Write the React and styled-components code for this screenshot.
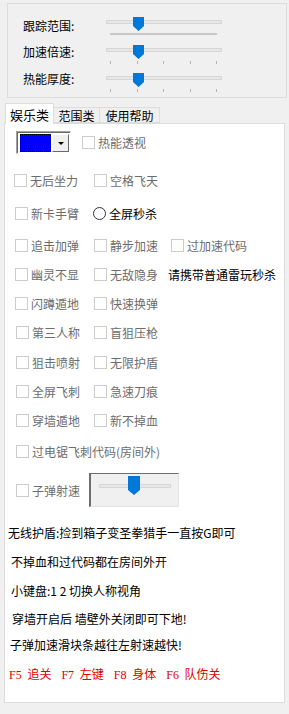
import React from "react";
import styled, { createGlobalStyle } from "styled-components";

const GlobalStyle = createGlobalStyle`
  html, body {
    margin: 0;
    padding: 0;
    background: #f0f0f0;
  }
  body {
    font-family: "Noto Sans CJK SC", "Noto Sans", sans-serif;
    font-size: 12px;
    color: #000;
  }
`;

const Window = styled.div`
  width: 289px;
  height: 714px;
  padding-top: 3px;
  box-sizing: border-box;
  background: #f0f0f0;
  overflow: hidden;
`;

const GroupBox = styled.div`
  margin-left: 7px;
  width: 280px;
  height: 95px;
  box-sizing: border-box;
  border: 1px solid #dcdcdc;
  padding: 13px 0 0 15px;
`;

const SliderRow = styled.div`
  display: flex;
  height: 28px;
`;

const SliderLabel = styled.span`
  width: 83px;
  line-height: 16px;
  margin-top: ${(p) => p.$mt}px;
  white-space: nowrap;
`;

const Track = styled.div`
  position: relative;
  width: 116px;
  height: 20px;
`;

const Rail = styled.div`
  margin-top: 3px;
  height: 2px;
  border: 1px solid #d6d6d6;
  background: #e7e7e7;
`;

const Thumb = styled.svg`
  position: absolute;
  left: ${(p) => p.$left}px;
  top: ${(p) => p.$top}px;
`;

const TickBar = styled.div`
  margin: 9px 5px 0 4px;
  height: 2px;
  background: #c8c8c8;
`;

const Ticks = styled.div`
  display: flex;
  justify-content: space-between;
  margin: 9px 5px 0 4px;
`;

const Tick = styled.i`
  width: 1px;
  height: 3px;
  background: #b4b4b4;
`;

const Tabs = styled.div`
  display: flex;
  align-items: flex-end;
  height: 20px;
  margin: 5px 0 0 5px;
  position: relative;
  z-index: 1;
`;

const Tab = styled.div`
  box-sizing: border-box;
  width: ${(p) => p.$w}px;
  height: ${(p) => (p.$active ? 21 : 16)}px;
  margin-bottom: ${(p) => (p.$active ? -1 : 0)}px;
  border: 1px solid #dcdcdc;
  border-bottom: ${(p) => (p.$active ? "none" : "1px solid #dcdcdc")};
  border-left: ${(p) => (p.$first || p.$active ? "1px solid #dcdcdc" : "none")};
  background: ${(p) => (p.$active ? "#fff" : "#f0f0f0")};
  display: flex;
  align-items: center;
  justify-content: center;
  font-size: ${(p) => (p.$active ? 13 : 12)}px;
  white-space: nowrap;
`;

const Panel = styled.div`
  margin-left: 4px;
  width: 281px;
  height: 580px;
  box-sizing: border-box;
  border: 1px solid #dcdcdc;
  background: #fff;
  padding-top: 7px;
`;

const ColorRow = styled.div`
  display: flex;
  align-items: center;
  height: 23px;
  padding-left: 11px;
`;

const Combo = styled.div`
  display: flex;
  width: 55px;
  height: 23px;
  box-sizing: border-box;
  border: 1px solid;
  border-color: #a0a0a0 #ffffff #ffffff #a0a0a0;
  box-shadow: inset 1px 1px #696969;
  padding: 2px 1px 1px 3px;
  gap: 1px;
  background: #fff;
`;

const Swatch = styled.div`
  flex: 1;
  box-sizing: border-box;
  background: ${(p) => p.$color};
  border: 1px dotted #ffffff;
  outline: 1px dotted #000;
  outline-offset: -1px;
`;

const DropBtn = styled.div`
  width: 17px;
  box-sizing: border-box;
  background: #f0f0f0;
  border: 1px solid;
  border-color: #ffffff #696969 #696969 #ffffff;
  display: flex;
  align-items: center;
  justify-content: center;
  &::after {
    content: "";
    border-left: 3px solid transparent;
    border-right: 3px solid transparent;
    border-top: 3px solid #000;
  }
`;

const OptRow = styled.div`
  display: grid;
  grid-template-columns: ${(p) => 89 - p.$pl}px 77px auto;
  align-items: center;
  height: 28px;
  margin-top: ${(p) => p.$mt}px;
  padding-left: ${(p) => p.$pl}px;
`;

const Check = styled.label`
  display: inline-flex;
  align-items: center;
  gap: 3px;
  margin-left: ${(p) => p.$ml || 0}px;
  color: ${(p) => (p.$enabled ? "#000" : "#6d6d6d")};
  white-space: nowrap;
  grid-column: ${(p) => (p.$wide ? "1 / -1" : "auto")};
`;

const Box = styled.span`
  width: 13px;
  height: 13px;
  box-sizing: border-box;
  border: 1px solid #cccccc;
  background: #fff;
  flex: none;
`;

const RadioDot = styled.span`
  width: 13px;
  height: 13px;
  box-sizing: border-box;
  border: 1px solid #333;
  border-radius: 50%;
  background: #fff;
  flex: none;
`;

const Hint = styled.span`
  margin-left: -3px;
  white-space: nowrap;
`;

const SpeedRow = styled.div`
  display: grid;
  grid-template-columns: 73px auto;
  align-items: center;
  height: 34px;
  margin-top: 8px;
  padding-left: 11px;
`;

const SpeedFrame = styled.div`
  position: relative;
  width: 90px;
  height: 34px;
  box-sizing: border-box;
  border-style: solid;
  border-width: 1px 1px 1px 2px;
  border-color: #6e6e6e #e3e3e3 #e3e3e3 #6e6e6e;
  background: #f0f0f0;
  padding: 10px 7px 0 8px;
`;

const Note = styled.p`
  margin: ${(p) => p.$mt}px 0 0 ${(p) => p.$pl}px;
  line-height: 20px;
  white-space: nowrap;
`;

const Keys = styled.div`
  display: flex;
  gap: 10px;
  margin: 9px 0 0 4px;
  line-height: 20px;
  color: #e00000;
  white-space: nowrap;
`;

const Key = styled.span`
  word-spacing: 3px;
  & b {
    font-family: "Liberation Serif", serif;
    font-weight: normal;
  }
`;

const ThumbShape = ({ left, top, w = 11, h = 14 }) => (
  <Thumb $left={left} $top={top} width={w} height={h} viewBox={`0 0 ${w} ${h}`}>
    <path d={`M0 0H${w}V${h - 5}L${w / 2} ${h}L0 ${h - 5}Z`} fill="#0078d7" />
  </Thumb>
);

const Slider = ({ bar }) => (
  <Track>
    <Rail />
    <ThumbShape left={27} top={0} />
    {bar ? (
      <TickBar />
    ) : (
      <Ticks>
        {[0, 1, 2, 3, 4].map((i) => (
          <Tick key={i} />
        ))}
      </Ticks>
    )}
  </Track>
);

const CheckBox = ({ label, enabled, wide, ml }) => (
  <Check $enabled={enabled} $wide={wide} $ml={ml}>
    <Box />
    {label}
  </Check>
);

const rows = [
  { mt: 12, pl: 9, items: ["无后坐力", "空格飞天"] },
  { mt: 5, pl: 10, items: ["新卡手臂", { radio: "全屏秒杀" }] },
  { mt: 4, pl: 10, items: ["追击加弹", "静步加速", "过加速代码"] },
  { mt: 1, pl: 10, items: ["幽灵不显", "无敌隐身", { hint: "请携带普通雷玩秒杀" }] },
  { mt: 1, pl: 10, items: ["闪蹲遁地", "快速换弹"] },
  { mt: 1, pl: 11, items: ["第三人称", "盲狙压枪"] },
  { mt: 2, pl: 11, items: ["狙击喷射", "无限护盾"] },
  { mt: 1, pl: 11, items: ["全屏飞刺", "急速刀痕"] },
  { mt: 1, pl: 11, items: ["穿墙遁地", "新不掉血"] },
  { mt: 3, pl: 11, items: [{ wide: "过电锯飞刺代码(房间外)" }] },
];

const notes = [
  { mt: 16, pl: 3, text: "无线护盾:捡到箱子变圣拳猎手一直按G即可" },
  { mt: 9, pl: 6, text: "不掉血和过代码都在房间外开" },
  { mt: 9, pl: 6, text: "小键盘:1 2 切换人称视角" },
  { mt: 8, pl: 7, text: "穿墙开启后 墙壁外关闭即可下地!" },
  { mt: 6, pl: 5, text: "子弹加速滑块条越往左射速越快!" },
];

const keys = [
  ["F5", "追关"],
  ["F7", "左键"],
  ["F8", "身体"],
  ["F6", "队伤关"],
];

const renderItem = (item, i) => {
  if (typeof item === "string") return <CheckBox key={i} label={item} />;
  if (item.radio)
    return (
      <Check key={i} $enabled $ml={-1}>
        <RadioDot />
        {item.radio}
      </Check>
    );
  if (item.hint) return <Hint key={i}>{item.hint}</Hint>;
  return <CheckBox key={i} label={item.wide} wide />;
};

export default function App() {
  return (
    <Window>
      <GlobalStyle />
      <GroupBox>
        <SliderRow>
          <SliderLabel $mt={1}>跟踪范围:</SliderLabel>
          <Slider bar />
        </SliderRow>
        <SliderRow>
          <SliderLabel $mt={-1}>加速倍速:</SliderLabel>
          <Slider />
        </SliderRow>
        <SliderRow>
          <SliderLabel $mt={-2}>热能厚度:</SliderLabel>
          <Slider />
        </SliderRow>
      </GroupBox>

      <Tabs>
        <Tab $active $w={49}>娱乐类</Tab>
        <Tab $w={46}>范围类</Tab>
        <Tab $w={60}>使用帮助</Tab>
      </Tabs>

      <Panel>
        <ColorRow>
          <Combo>
            <Swatch $color="#0000ff" />
            <DropBtn />
          </Combo>
          <CheckBox label="热能透视" ml={11} />
        </ColorRow>

        {rows.map((row, r) => (
          <OptRow key={r} $mt={row.mt} $pl={row.pl}>
            {row.items.map(renderItem)}
          </OptRow>
        ))}

        <SpeedRow>
          <CheckBox label="子弹射速" />
          <SpeedFrame>
            <Rail style={{ marginTop: 0 }} />
            <ThumbShape left={37} top={2} w={12} h={19} />
          </SpeedFrame>
        </SpeedRow>

        {notes.map((n, i) => (
          <Note key={i} $mt={n.mt} $pl={n.pl}>
            {n.text}
          </Note>
        ))}

        <Keys>
          {keys.map(([k, v]) => (
            <Key key={k}>
              <b>{k}</b> {v}
            </Key>
          ))}
        </Keys>
      </Panel>
    </Window>
  );
}
